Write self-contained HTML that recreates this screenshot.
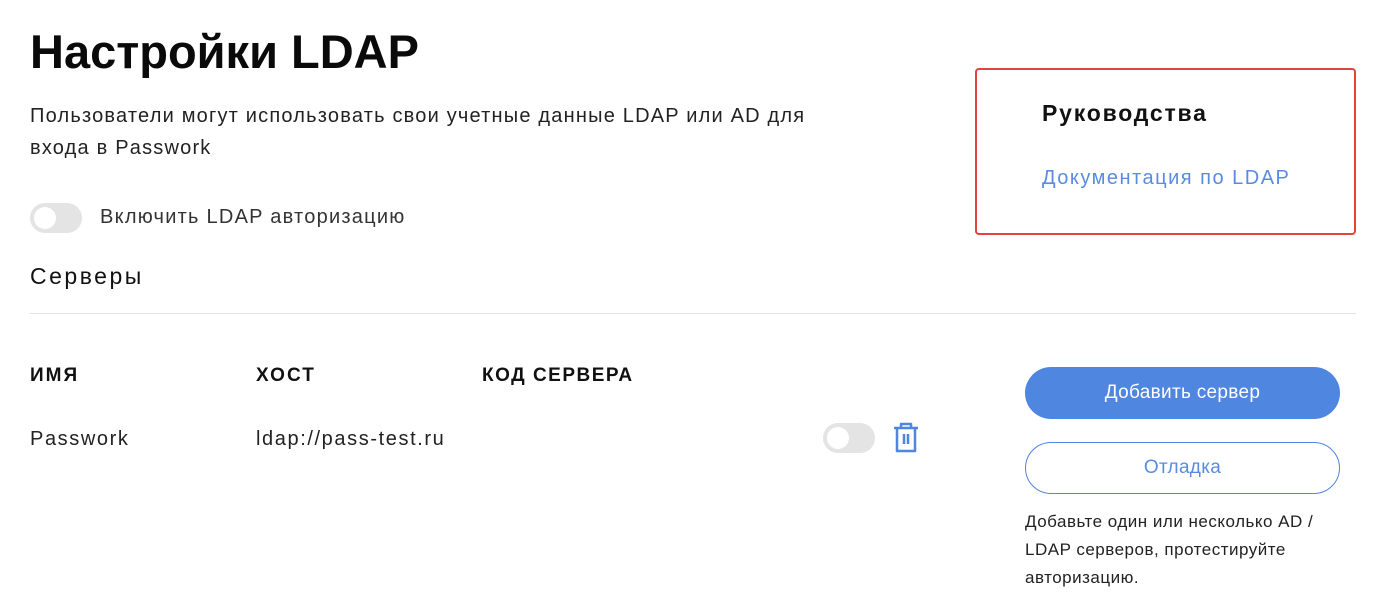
<!DOCTYPE html>
<html><head><meta charset="utf-8"><style>
body{margin:0;width:1393px;height:605px;background:#fff;font-family:"Liberation Sans","DejaVu Sans",sans-serif;color:#111;position:relative;overflow:hidden}
.a{position:absolute;white-space:nowrap}
.tg{position:absolute;width:52px;height:30px;border-radius:15px;background:#e4e4e4}
.tg:after{content:"";position:absolute;left:4px;top:4px;width:22px;height:22px;border-radius:50%;background:#fff}
</style></head><body>
<div class="a" style="left:30px;top:24px;font-size:47px;font-weight:bold;color:#0a0a0a;letter-spacing:0">Настройки LDAP</div>
<div class="a" style="left:30px;top:100px;font-size:20px;line-height:32px;color:#222;letter-spacing:1.2px">Пользователи могут использовать свои учетные данные LDAP или AD для<br>входа в Passwork</div>
<div class="tg" style="left:30px;top:203px"></div>
<div class="a" style="left:100px;top:206px;font-size:20px;color:#333;letter-spacing:1.25px">Включить LDAP авторизацию</div>
<div class="a" style="left:30px;top:263px;font-size:23px;color:#111;letter-spacing:2.5px">Серверы</div>
<div style="position:absolute;left:30px;top:313px;width:1326px;height:1px;background:#e2e2e2"></div>
<div class="a" style="left:30px;top:365px;font-size:19px;font-weight:bold;letter-spacing:2px">ИМЯ</div>
<div class="a" style="left:256px;top:365px;font-size:19px;font-weight:bold;letter-spacing:2px">ХОСТ</div>
<div class="a" style="left:482px;top:365px;font-size:19px;font-weight:bold;letter-spacing:1.5px">КОД СЕРВЕРА</div>
<div class="a" style="left:30px;top:428px;font-size:20px;color:#222;letter-spacing:1.6px">Passwork</div>
<div class="a" style="left:256px;top:428px;font-size:20px;color:#222;letter-spacing:1.6px">ldap://pass-test.ru</div>
<div class="tg" style="left:823px;top:423px"></div>
<svg style="position:absolute;left:892px;top:422px" width="28" height="32" viewBox="0 0 28 32" fill="none" stroke="#4f86e0" stroke-width="2.5" stroke-linejoin="round"><path d="M2 6H26M9 6V2H19V6M5 6V29H23V6M12 12V22M16 12V22"/></svg>
<div style="position:absolute;left:975px;top:68px;width:377px;height:163px;border:2px solid #e0443a;border-radius:4px"></div>
<div class="a" style="left:1042px;top:100px;font-size:23px;font-weight:bold;letter-spacing:1.8px">Руководства</div>
<div class="a" style="left:1042px;top:167px;font-size:20px;color:#5a8be0;letter-spacing:1.5px">Документация по LDAP</div>
<div style="position:absolute;left:1025px;top:367px;width:315px;height:52px;border-radius:26px;background:#4f86e0;color:#fff;font-size:19px;text-align:center;line-height:52px;letter-spacing:0.3px">Добавить сервер</div>
<div style="position:absolute;left:1025px;top:442px;width:313px;height:50px;border-radius:26px;border:1px solid #4f86e0;color:#5a8be0;font-size:19px;text-align:center;line-height:50px;letter-spacing:0.3px">Отладка</div>
<div class="a" style="left:1025px;top:508px;font-size:17px;line-height:28px;color:#222;letter-spacing:0.5px">Добавьте один или несколько AD /<br>LDAP серверов, протестируйте<br>авторизацию.</div>
</body></html>
